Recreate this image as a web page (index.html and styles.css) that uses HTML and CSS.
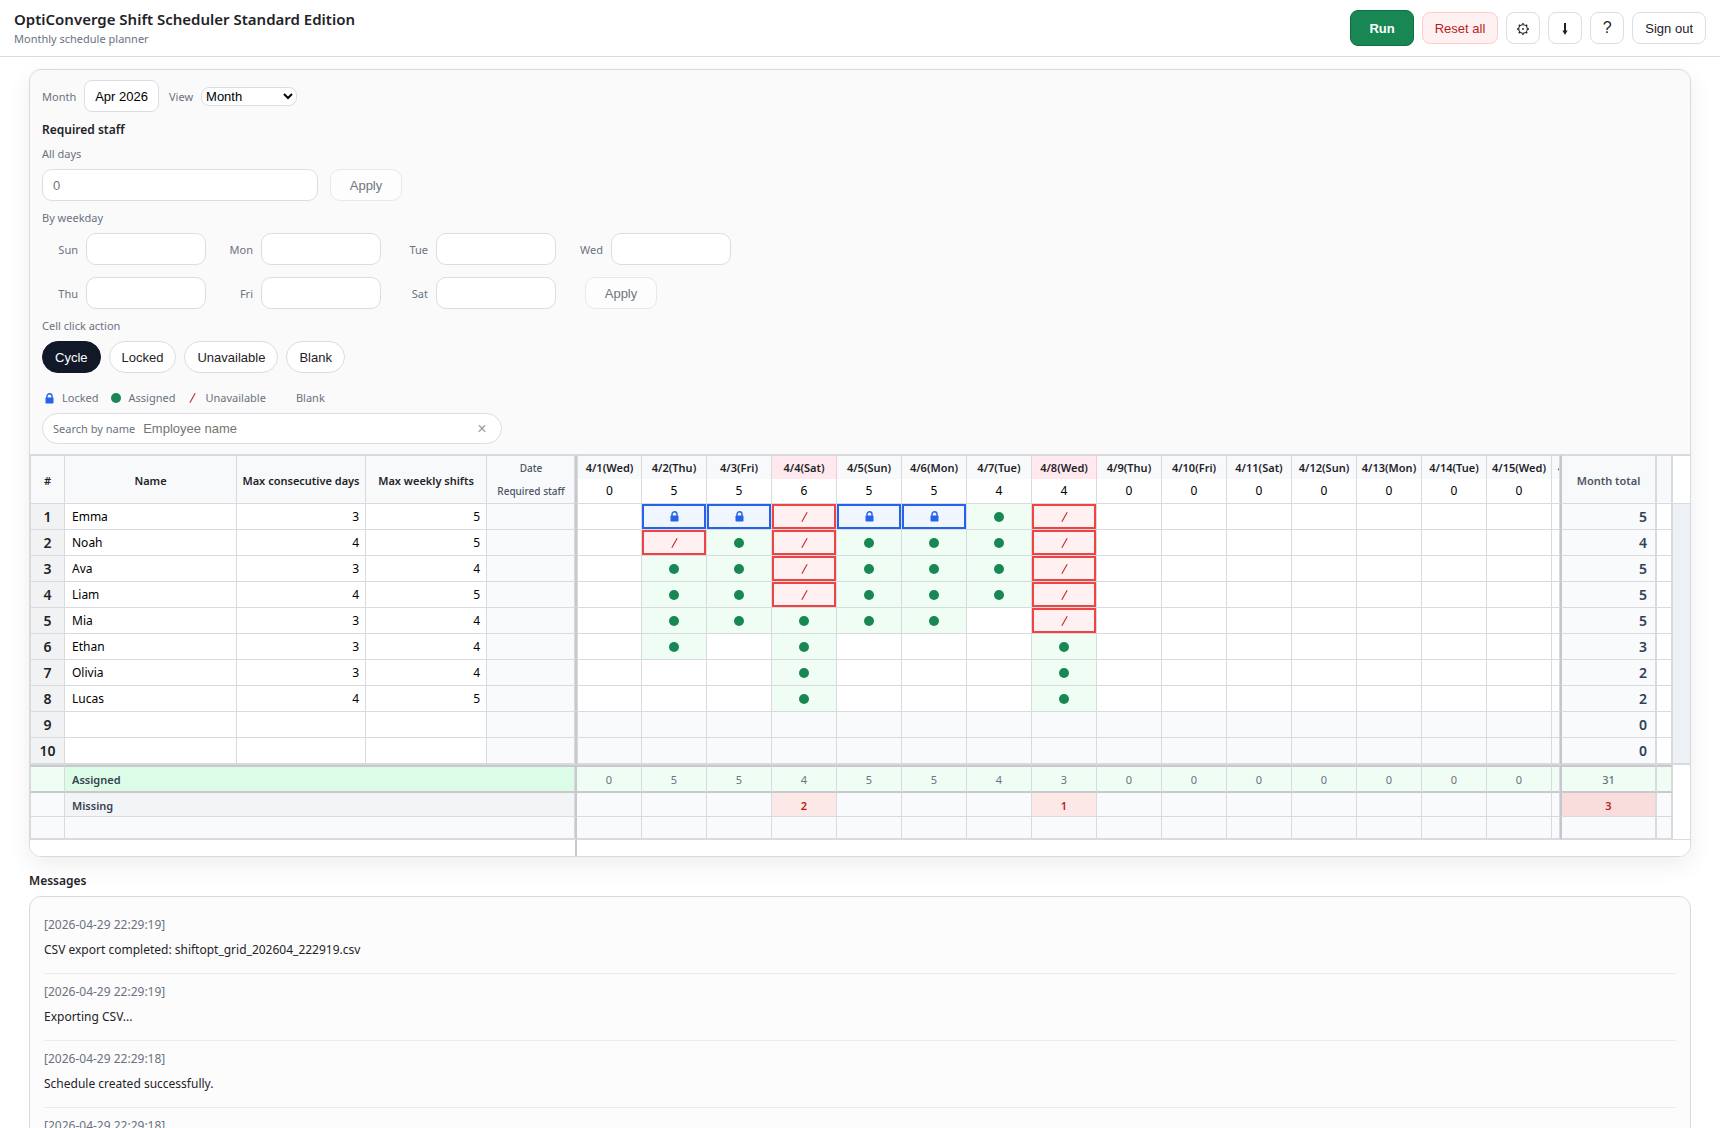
FILE: index.html
```
<!DOCTYPE html>
<html lang="en">
<head>
  <meta charset="UTF-8">
  <meta name="viewport" content="width=device-width, initial-scale=1.0">
  <title>OptiConverge Shift Scheduler</title>
  <link rel="stylesheet" href="styles.css">
</head>
<body>
  <header class="topbar">
    <div class="brand">
      <h1>OptiConverge Shift Scheduler Standard Edition</h1>
      <p>Monthly schedule planner</p>
    </div>
    <div class="actions">
      <button type="button" class="btn btn-run">Run</button>
      <button type="button" class="btn btn-danger">Reset all</button>
      <button type="button" class="btn btn-icon" aria-label="Settings">
        <svg width="14" height="14" viewBox="0 0 14 14" fill="none" stroke="currentColor">
          <circle cx="7" cy="8" r="4.3" stroke-width="1.1"/>
          <circle cx="7" cy="8" r="0.9" fill="currentColor" stroke="none"/>
          <path d="M7 2v1.6M7 12.4V14M1 8h1.6M11.4 8H13M2.8 3.8l1.1 1.1M10.1 11.1l1.1 1.1M2.8 12.2l1.1-1.1M10.1 4.9l1.1-1.1" stroke-width="1.4"/>
        </svg>
      </button>
      <button type="button" class="btn btn-icon" aria-label="Download">
        <svg width="14" height="14" viewBox="0 0 14 14">
          <path d="M6 2h2v7.5h1.6L7 14 4.4 9.5H6z" fill="currentColor"/>
        </svg>
      </button>
      <button type="button" class="btn btn-icon btn-help">?</button>
      <button type="button" class="btn">Sign out</button>
    </div>
  </header>

  <main class="page">
    <section class="card">
      <div class="tools">
        <div class="period">
          <label for="month">Month</label>
          <button type="button" class="btn btn-month" id="month">Apr 2026</button>
          <label for="view">View</label>
          <select id="view">
            <option>Month</option>
            <option>Week</option>
          </select>
        </div>

        <h2>Required staff</h2>
        <label class="caption" for="allDays">All days</label>
        <div class="all-days">
          <input type="text" class="field" id="allDays" placeholder="0">
          <button type="button" class="btn btn-apply" disabled>Apply</button>
        </div>

        <p class="caption">By weekday</p>
        <div class="weekdays">
          <div class="weekday"><label for="sun">Sun</label><input type="text" class="field" id="sun"></div>
          <div class="weekday"><label for="mon">Mon</label><input type="text" class="field" id="mon"></div>
          <div class="weekday"><label for="tue">Tue</label><input type="text" class="field" id="tue"></div>
          <div class="weekday"><label for="wed">Wed</label><input type="text" class="field" id="wed"></div>
          <div class="weekday"><label for="thu">Thu</label><input type="text" class="field" id="thu"></div>
          <div class="weekday"><label for="fri">Fri</label><input type="text" class="field" id="fri"></div>
          <div class="weekday"><label for="sat">Sat</label><input type="text" class="field" id="sat"></div>
          <div class="weekday-apply"><button type="button" class="btn btn-apply" disabled>Apply</button></div>
        </div>

        <p class="caption">Cell click action</p>
        <div class="modes">
          <button type="button" class="btn pill active">Cycle</button>
          <button type="button" class="btn pill">Locked</button>
          <button type="button" class="btn pill">Unavailable</button>
          <button type="button" class="btn pill">Blank</button>
        </div>

        <ul class="legend">
          <li><span class="mark" data-mark="L"></span>Locked</li>
          <li><span class="mark" data-mark="A"></span>Assigned</li>
          <li><span class="mark" data-mark="U"></span>Unavailable</li>
          <li><span class="mark"></span>Blank</li>
        </ul>

        <div class="search">
          <label for="search">Search by name</label>
          <input type="text" id="search" placeholder="Employee name">
          <button type="button" aria-label="Clear">×</button>
        </div>
      </div>

      <table class="grid">
        <colgroup id="cols"></colgroup>
        <thead id="gridHead"></thead>
        <tbody id="gridBody"></tbody>
        <tfoot id="gridFoot"></tfoot>
      </table>
    </section>

    <h2 class="messages-title">Messages</h2>
    <section class="card messages">
      <article><time>[2026-04-29 22:29:19]</time><p>CSV export completed: shiftopt_grid_202604_222919.csv</p></article>
      <article><time>[2026-04-29 22:29:19]</time><p>Exporting CSV...</p></article>
      <article><time>[2026-04-29 22:29:18]</time><p>Schedule created successfully.</p></article>
      <article><time>[2026-04-29 22:29:18]</time><p>Creating schedule...</p></article>
    </section>
  </main>

  <script>
    var weekdays = ['Wed', 'Thu', 'Fri', 'Sat', 'Sun', 'Mon', 'Tue'];
    var required = [0, 5, 5, 6, 5, 5, 4, 4, 0, 0, 0, 0, 0, 0, 0];
    var assigned = [0, 5, 5, 4, 5, 5, 4, 3, 0, 0, 0, 0, 0, 0, 0];

    // L = locked, A = assigned, U = unavailable, - = blank
    var staff = [
      { name: 'Emma', days: 3, shifts: 5, plan: '-LLULLAU', total: 5 },
      { name: 'Noah', days: 4, shifts: 5, plan: '-UAUAAAU', total: 4 },
      { name: 'Ava', days: 3, shifts: 4, plan: '-AAUAAAU', total: 5 },
      { name: 'Liam', days: 4, shifts: 5, plan: '-AAUAAAU', total: 5 },
      { name: 'Mia', days: 3, shifts: 4, plan: '-AAAAA-U', total: 5 },
      { name: 'Ethan', days: 3, shifts: 4, plan: '-A-A---A', total: 3 },
      { name: 'Olivia', days: 3, shifts: 4, plan: '---A---A', total: 2 },
      { name: 'Lucas', days: 4, shifts: 5, plan: '---A---A', total: 2 },
      { name: '', days: '', shifts: '', plan: '', total: 0 },
      { name: '', days: '', shifts: '', plan: '', total: 0 }
    ];

    var marks = {
      L: '<svg class="lock" width="9" height="11" viewBox="0 0 9 11"><path d="M2 5V3a2.5 2.2 0 0 1 5 0v2" fill="none" stroke="currentColor" stroke-width="1.4"/><rect x="0.5" y="4.5" width="8" height="6" rx="0.8" fill="currentColor"/></svg>',
      A: '<svg class="dot" width="10" height="10" viewBox="0 0 10 10"><circle cx="5" cy="5" r="5" fill="currentColor"/></svg>',
      U: '<svg class="slash" width="7" height="10" viewBox="0 0 7 10"><path d="M6.2 0.3L0.8 9.7" stroke="currentColor" stroke-width="1.1"/></svg>'
    };
    var states = { L: 'locked', A: 'assigned', U: 'unavailable' };

    function cell(tag, cls, html, extra) {
      return '<' + tag + ' class="' + cls + '"' + (extra || '') + '>' + html + '</' + tag + '>';
    }

    function eachDay(fn) {
      var out = '';
      for (var d = 0; d < 15; d++) out += fn(d);
      return out;
    }

    document.getElementById('cols').innerHTML =
      '<col class="c-num"><col class="c-name"><col class="c-days"><col class="c-shifts"><col class="c-req">' +
      eachDay(function () { return '<col class="c-day">'; }) +
      '<col><col class="c-total"><col class="c-spare"><col class="c-gutter">';

    var two = ' rowspan="2"';
    document.getElementById('gridHead').innerHTML =
      '<tr>' + cell('th', 'num', '#', two) + cell('th', '', 'Name', two) +
      cell('th', '', 'Max consecutive days', two) + cell('th', '', 'Max weekly shifts', two) +
      cell('th', 'req req-date', 'Date') +
      eachDay(function (d) {
        var short = required[d] > assigned[d];
        return cell('th', 'day' + (short ? ' short' : ''), '4/' + (d + 1) + '(' + weekdays[d % 7] + ')');
      }) +
      cell('th', 'day cut', '4/16(Thu)') + cell('th', 'total', 'Month total', two) +
      cell('th', 'spare', '', two) + cell('td', 'gutter', '', two) + '</tr>' +
      '<tr>' + cell('th', 'req', 'Required staff') +
      eachDay(function (d) { return cell('td', 'need', required[d]); }) +
      cell('td', 'need', '') + '</tr>';

    document.getElementById('gridBody').innerHTML = staff.map(function (s, i) {
      return '<tr' + (s.name ? '' : ' class="empty"') + '>' +
        cell('th', 'num', i + 1) + cell('td', 'name', s.name) +
        cell('td', 'limit', s.days) + cell('td', 'limit', s.shifts) + cell('td', 'req', '') +
        eachDay(function (d) {
          var m = s.plan[d];
          return cell('td', 'slot ' + (states[m] || ''), marks[m] || '');
        }) +
        cell('td', 'slot', '') + cell('td', 'total', s.total) + cell('td', 'spare', '') +
        cell('td', 'gutter', '') + '</tr>';
    }).join('');

    document.getElementById('gridFoot').innerHTML =
      '<tr class="sum-assigned">' + cell('td', 'num', '') + cell('th', 'label', 'Assigned', ' colspan="4"') +
      eachDay(function (d) { return cell('td', '', assigned[d]); }) +
      cell('td', '', '') + cell('td', 'total', 31) + cell('td', 'spare', '') + cell('td', 'gutter', '') + '</tr>' +
      '<tr class="sum-missing">' + cell('td', 'num', '') + cell('th', 'label', 'Missing', ' colspan="4"') +
      eachDay(function (d) {
        var gap = required[d] - assigned[d];
        return cell('td', gap > 0 ? 'gap' : '', gap > 0 ? gap : '');
      }) +
      cell('td', '', '') + cell('td', 'total gap', 3) + cell('td', 'spare', '') + cell('td', 'gutter', '') + '</tr>' +
      '<tr class="sum-blank">' + cell('td', 'num', '') + cell('td', 'label', '', ' colspan="4"') +
      eachDay(function () { return cell('td', '', ''); }) +
      cell('td', '', '') + cell('td', 'total', '') + cell('td', 'spare', '') + cell('td', 'gutter', '') + '</tr>' +
      '<tr class="scroll">' + cell('td', 'label', '', ' colspan="5"') + cell('td', 'track', '', ' colspan="19"') + '</tr>';

    document.querySelectorAll('.mark').forEach(function (el) {
      el.innerHTML = marks[el.dataset.mark] || '';
    });
  </script>
</body>
</html>
```
FILE: styles.css
```
* {
  margin: 0;
  padding: 0;
  box-sizing: border-box;
}

html {
  overflow: hidden;
}

body {
  background: #fff;
  color: #1f2328;
  font-family: "Noto Sans", "Segoe UI", sans-serif;
  font-size: 11px;
}

button,
input,
select {
  font-family: "Liberation Sans", Arial, sans-serif;
  font-size: 13px;
}

/* Top bar */
.topbar {
  display: flex;
  justify-content: space-between;
  align-items: center;
  height: 57px;
  padding: 0 14px;
  border-bottom: 1px solid #d9dade;
}

.brand h1 {
  margin-bottom: 1px;
  font-size: 15px;
  font-weight: 600;
  line-height: 20px;
}

.brand p {
  color: #6b7280;
  line-height: 18px;
}

.actions {
  display: flex;
  align-items: center;
  gap: 8px;
}

.btn {
  height: 32px;
  padding: 0 12px;
  background: #fff;
  color: #1f2328;
  border: 1px solid #dcdde1;
  border-radius: 8px;
  cursor: pointer;
}

.btn-run {
  height: 36px;
  padding: 0 18px;
  background: #198754;
  color: #fff;
  border-color: #146c43;
  font-weight: bold;
}

.btn-danger {
  background: #fff1f1;
  color: #b91c1c;
  border-color: #fecaca;
}

.btn-icon {
  display: flex;
  justify-content: center;
  align-items: center;
  width: 34px;
  padding: 0;
}

.btn-help {
  font-size: 16px;
}

/* Cards */
.page {
  padding: 12px 29px 0;
}

.card {
  background: #fafafa;
  border: 1px solid #d9dade;
  border-radius: 12px;
  overflow: hidden;
  box-shadow: 0 8px 24px rgba(0, 0, 0, 0.07);
}

.tools {
  padding: 10px 12px;
}

.tools label,
.caption,
.legend {
  color: #6b7280;
}

h2 {
  font-size: 12px;
  font-weight: 600;
  line-height: 17px;
}

.period {
  display: flex;
  align-items: center;
  gap: 8px;
  margin-bottom: 9px;
}

.btn-month {
  padding: 0 10px;
  margin-right: 2px;
  color: #000;
}

.period select {
  width: 96px;
  height: 19px;
  background: #fff;
  border: 1px solid #dcdde1;
  border-radius: 8px;
  color: #000;
}

.caption {
  display: block;
  margin: 8px 0 6px;
  line-height: 18px;
}

h2 + .caption {
  margin-top: 7px;
}

.field {
  width: 120px;
  height: 32px;
  padding: 0 10px;
  background: #fff;
  border: 1px solid #dcdde1;
  border-radius: 10px;
}

.field::placeholder,
.search input::placeholder {
  color: #757575;
}

.all-days {
  display: flex;
  gap: 12px;
}

.all-days .field {
  width: 276px;
}

.btn-apply {
  width: 72px;
  border-radius: 10px;
  border-color: #e8e9ec;
  background: #fdfdfd;
  color: #70757c;
}

.weekdays {
  display: grid;
  grid-template-columns: repeat(4, 164px);
  gap: 12px 11px;
}

.weekday {
  display: flex;
  align-items: center;
  gap: 8px;
}

.weekday label {
  width: 36px;
  text-align: right;
}

.weekday-apply {
  padding-left: 18px;
}

.modes {
  display: flex;
  gap: 8px;
}

.pill {
  border-radius: 16px;
}

.pill.active {
  background: #111827;
  border-color: #111827;
  color: #fff;
}

.legend {
  display: flex;
  gap: 10px;
  margin-top: 16px;
  line-height: 18px;
  list-style: none;
}

.legend li {
  display: flex;
  align-items: center;
  gap: 6px;
}

.mark {
  display: flex;
  justify-content: center;
  width: 14px;
}

.lock {
  color: #2563eb;
}

.dot {
  color: #198754;
}

.slash {
  color: #c62828;
}

.search {
  display: flex;
  align-items: center;
  gap: 8px;
  width: 460px;
  height: 31px;
  margin-top: 6px;
  padding: 0 10px;
  background: #fff;
  border: 1px solid #dcdde1;
  border-radius: 16px;
}

.search input {
  flex: 1;
  border: none;
  outline: none;
}

.search button {
  width: 18px;
  background: none;
  border: none;
  color: #9a9da3;
  font-size: 16px;
}

/* Schedule grid */
.grid {
  width: 100%;
  table-layout: fixed;
  border-collapse: separate;
  border-spacing: 0;
  border-top: 1px solid #d9dade;
  background: #fff;
}

.c-num { width: 35px; }
.c-name { width: 172px; }
.c-days { width: 129px; }
.c-shifts { width: 121px; }
.c-req { width: 90px; }
.c-day { width: 65px; }
.c-total { width: 97px; }
.c-spare { width: 16px; }
.c-gutter { width: 17px; }

.grid th,
.grid td {
  height: 26px;
  border-right: 1px solid #d9dade;
  border-bottom: 1px solid #d9dade;
  font-size: 11px;
  line-height: 18px;
  text-align: center;
  white-space: nowrap;
  overflow: hidden;
}

.grid th {
  background: #f8f9fb;
  font-weight: 600;
}

.grid thead th,
.grid thead td {
  height: 25px;
}

.grid thead tr:first-child > * {
  height: 24px;
  border-top: 1px solid #d9dade;
}

.grid thead th[rowspan] {
  padding-top: 2px;
}

.grid .num {
  border-left: 1px solid #d9dade;
}

.grid .req,
.grid .label {
  border-right: 2px solid #c8c9ce;
  box-shadow: inset -1px 0 #d9dade;
}

.grid .req + td,
.grid .req + th {
  border-left: 1px solid #d9dade;
}

.grid thead .req {
  color: #4b5563;
  font-size: 10px;
  font-weight: 500;
}

.grid .req-date,
.grid .day {
  border-bottom: none;
}

.grid .short {
  background: #ffe9ee;
  border-right-color: #f9c6d2;
}

.grid .cut {
  padding-left: 6px;
  text-align: left;
}

.grid .need {
  color: #000;
  font-size: 12px;
}

.grid .total {
  border-left: 2px solid #c3c7ce;
  border-right: 2px solid #d9dade;
}

.grid thead .total {
  color: #4b5563;
}

.grid .spare {
  border-right: 2px solid #d9dade;
}

.grid .gutter {
  border-right: none;
}

.grid tbody .num {
  padding-top: 1px;
  background: #f1f2f4;
  font-size: 14px;
}

.grid .name {
  padding: 1px 0 0 7px;
  color: #000;
  font-size: 12px;
  text-align: left;
}

.grid .limit {
  padding: 1px 6px 0 0;
  color: #000;
  font-size: 12px;
  text-align: right;
}

.grid tbody .req,
.grid .empty .slot {
  background: #f8fafc;
}

.grid tbody .total {
  padding: 1px 8px 0 0;
  background: #f8fafc;
  color: #334155;
  font-size: 14px;
  font-weight: 600;
  text-align: right;
}

.grid tbody .gutter {
  background: #edf0f5;
  border-bottom-color: #edf0f5;
}

.grid tbody tr:last-child > * {
  height: 27px;
  border-bottom: 2px solid #d9dade;
}

.slot svg {
  display: block;
  margin: 0 auto;
}

.grid .slot.assigned {
  background: #f0fdf4;
}

.grid .slot.locked {
  background: #eff6ff;
  box-shadow: inset 0 0 0 2px #2563eb;
}

.grid .slot.unavailable {
  background: #fff1f2;
  box-shadow: inset 0 0 0 2px #ef4444;
}

/* Summary rows */
.grid tfoot td,
.grid tfoot th {
  padding-top: 2px;
  background: #f8fafc;
}

.grid tfoot .label {
  padding-left: 7px;
  color: #374151;
  text-align: left;
}

.grid .sum-assigned > * {
  height: 28px;
  border-top: 2px solid #c8c9ce;
  border-bottom: 2px solid #c8c9ce;
}

.grid .sum-assigned td {
  background: #f0fdf4;
  color: #6b7280;
}

.grid .sum-assigned .label {
  background: #dcfce7;
}

.grid .sum-assigned .total {
  font-weight: 500;
}

.grid .sum-missing > * {
  height: 24px;
}

.grid .sum-missing .label {
  background: #f3f4f6;
}

.grid .sum-missing .gap {
  background: #fde8e8;
  color: #b91c1c;
  font-weight: 600;
}

.grid .sum-missing .total.gap {
  background: #f9dcdc;
}

.grid .sum-blank > * {
  height: 23px;
  border-bottom-width: 2px;
}

.grid tfoot .gutter {
  background: #fff;
  border-top-color: #fff;
  border-bottom-color: #fff;
}

.grid .sum-blank .gutter {
  border-bottom: 1px solid #d9dade;
}

.grid .scroll td {
  height: 16px;
  background: #fff;
  border-bottom: none;
  box-shadow: none;
}

.grid .scroll .track {
  border-right: none;
}

/* Messages */
.messages-title {
  margin: 15px 0 7px;
}

.messages {
  padding: 10px 14px;
  background: #fcfcfc;
  box-shadow: none;
}

.messages article {
  padding: 5px 0 11px;
  border-bottom: 1px solid #ebecf1;
  font-size: 12px;
  line-height: 25px;
}

.messages time {
  color: #6b7280;
}
```
